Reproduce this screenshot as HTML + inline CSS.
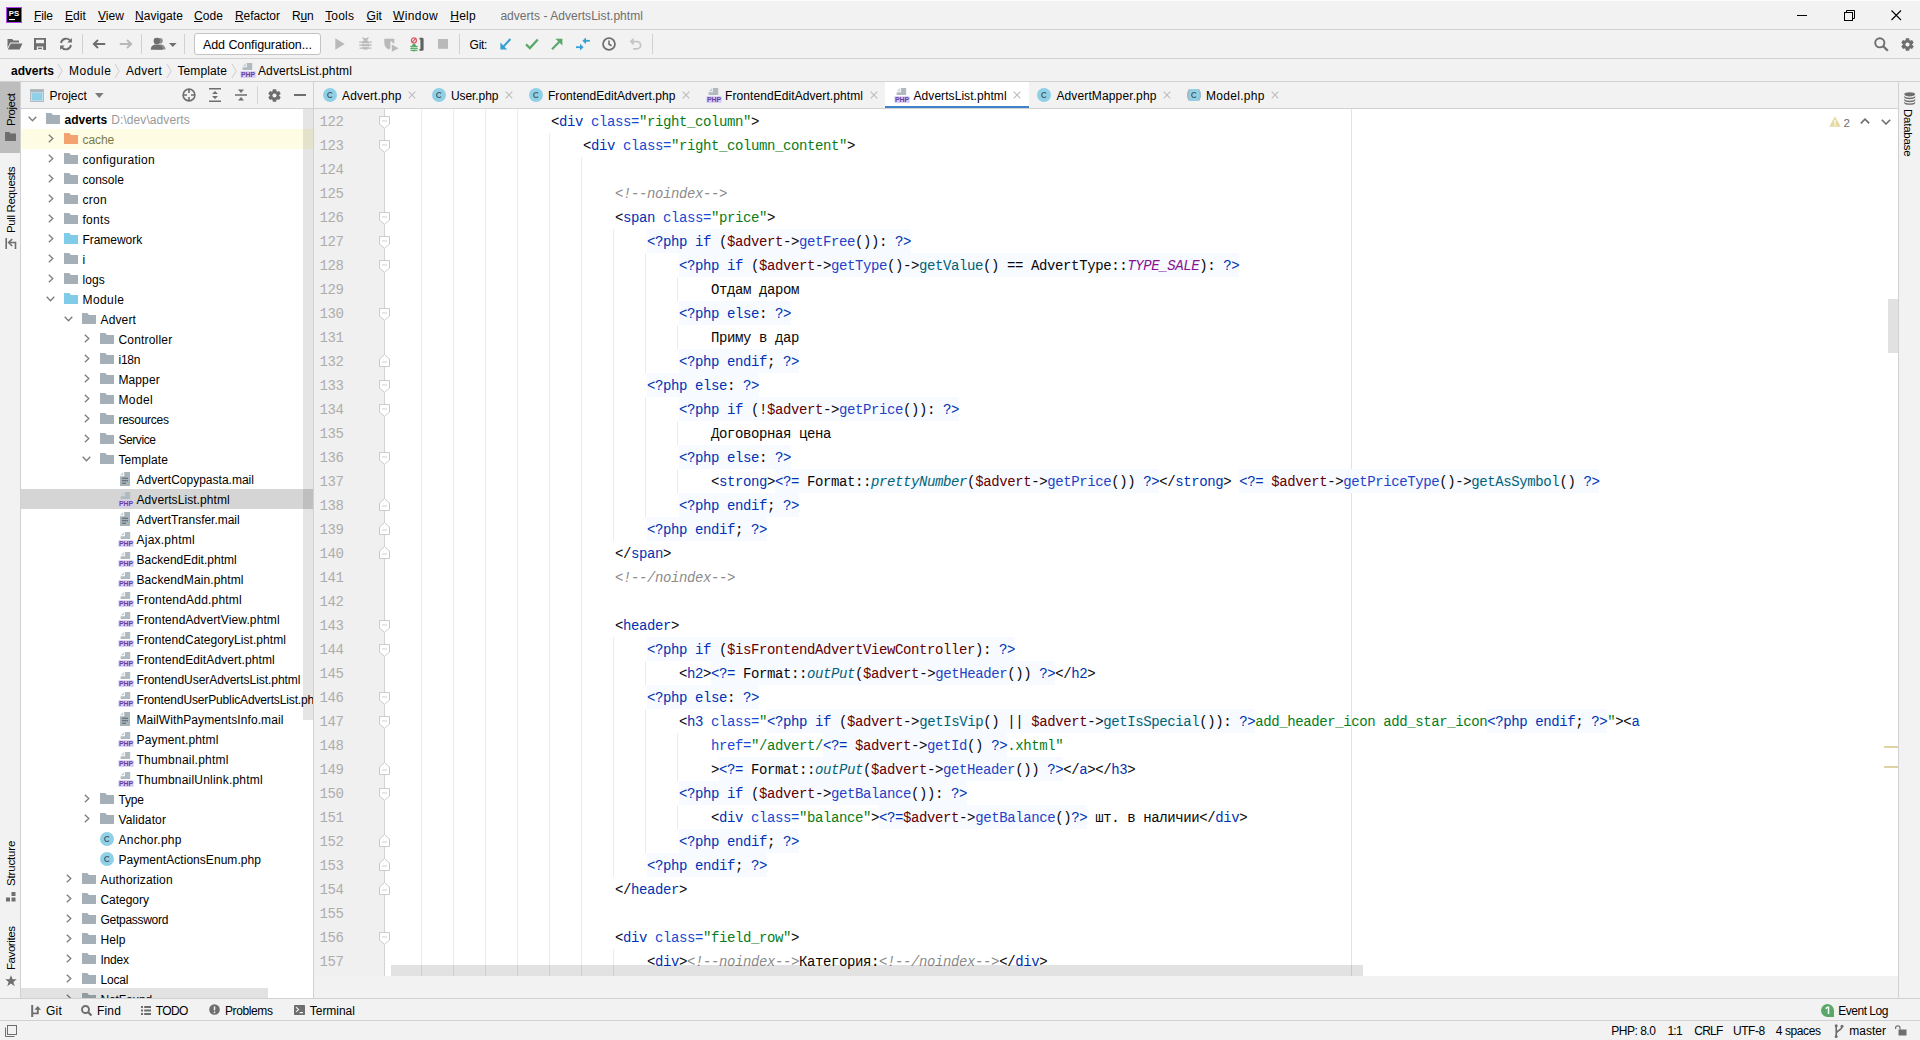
<!DOCTYPE html><html><head><meta charset="utf-8"><title>adverts - AdvertsList.phtml</title><style>

*{margin:0;padding:0;box-sizing:border-box}
html,body{width:1920px;height:1040px;overflow:hidden;background:#f2f2f2}
body{font-family:"Liberation Sans",sans-serif;font-size:12px;color:#000;position:relative}
.abs{position:absolute}
.hl{position:absolute;left:0;width:1920px;height:1px;background:#d1d1d1}
.t{position:absolute;white-space:pre;line-height:16px;height:16px}
u{text-decoration:underline;text-underline-offset:1px}
/* editor */
#ed{position:absolute;left:314px;top:109px;width:1584px;height:867px;background:#fff;overflow:hidden}
#gut{position:absolute;left:0;top:0;width:70px;height:867px;background:#f0f0f0}
#gline{position:absolute;left:70px;top:0;width:1px;height:867px;background:#d4d4d4}
.ln{position:absolute;left:0;width:29.5px;text-align:right;font-family:"Liberation Mono",monospace;font-size:14px;letter-spacing:-0.4px;line-height:26px;height:24px;color:#adadad}
.cl{position:absolute;white-space:pre;font-family:"Liberation Mono",monospace;font-size:14px;letter-spacing:-0.4px;line-height:26px;height:24px;color:#080808}
.P{background:#f7faff;padding:5px 0 3px}
.tn{color:#0033b3}.an{color:#174ad4}.av{color:#067d17}.cm{color:#8c8c8c;font-style:italic}
.kw{color:#0033b3}.v{color:#660000}.m{color:#00627a}.mm{color:#1f43c4}.sm{color:#00627a;font-style:italic}.cn{color:#871094;font-style:italic}
.g{position:absolute;width:1px;background:#ebebeb}
/* tree */
#tree{position:absolute;left:21px;top:109px;width:292px;height:889px;background:#fff;overflow:hidden}
.row{position:absolute;left:0;width:292px;height:20px}
.row .nm{position:absolute;top:3px;line-height:16px;white-space:pre;font-size:12px}
.row svg{position:absolute}

</style></head><body>
<svg class="abs" style="left:6px;top:7px" width="16" height="16" viewBox="0 0 16 16"><rect width="16" height="16" fill="#b345f1"/><rect x="1" y="1" width="14" height="14" fill="#000"/><text x="2.7" y="9" font-family="Liberation Sans" font-weight="bold" font-size="7.8" fill="#fff">PS</text><rect x="3" y="12" width="6" height="1.1" fill="#fff"/></svg>
<span class="t" style="left:34px;top:8px;letter-spacing:-0.148px;"><u>F</u>ile</span>
<span class="t" style="left:65px;top:8px;letter-spacing:0.071px;"><u>E</u>dit</span>
<span class="t" style="left:98px;top:8px;letter-spacing:0.034px;"><u>V</u>iew</span>
<span class="t" style="left:135px;top:8px;letter-spacing:0.075px;"><u>N</u>avigate</span>
<span class="t" style="left:194px;top:8px;letter-spacing:0.071px;"><u>C</u>ode</span>
<span class="t" style="left:235px;top:8px;letter-spacing:-0.066px;"><u>R</u>efactor</span>
<span class="t" style="left:292px;top:8px;letter-spacing:-0.208px;">R<u>u</u>n</span>
<span class="t" style="left:325.2px;top:8px;letter-spacing:0.171px;"><u>T</u>ools</span>
<span class="t" style="left:366.5px;top:8px;letter-spacing:0.028px;"><u>G</u>it</span>
<span class="t" style="left:393px;top:8px;letter-spacing:0.382px;"><u>W</u>indow</span>
<span class="t" style="left:450.2px;top:8px;letter-spacing:0.271px;"><u>H</u>elp</span>
<span class="t" style="left:500.4px;top:8px;color:#6e6e6e;letter-spacing:0.043px;">adverts - AdvertsList.phtml</span>
<svg class="abs" style="left:1797px;top:15px" width="10" height="1" viewBox="0 0 10 1"><rect width="10" height="1" fill="#000"/></svg>
<svg class="abs" style="left:1844px;top:10px" width="11" height="11" viewBox="0 0 11 11"><path d="M2.5 2.5V0.5h8v8h-2" fill="none" stroke="#000"/><rect x="0.5" y="2.5" width="8" height="8" fill="none" stroke="#000"/></svg>
<svg class="abs" style="left:1891px;top:10px" width="11" height="11" viewBox="0 0 11 11"><path d="M0.5 0.5L10 10M10 0.5L0.5 10" stroke="#000" stroke-width="1.1" fill="none"/></svg>
<div class="hl" style="top:29px"></div><div class="hl" style="top:0;background:#fbfbfb"></div>
<svg class="abs" style="left:7px;top:38px" width="16" height="12" viewBox="0 0 16 12"><path d="M0.5 1h4.6l1.4 1.6h5.5v2H3.3L0.5 10z" fill="#6e6e6e"/><path d="M3.8 5.6H15.5L12.6 11.5H0.8z" fill="#6e6e6e"/></svg>
<svg class="abs" style="left:34px;top:38px" width="12" height="12" viewBox="0 0 12 12"><path d="M0 0h12v12H0z M2 1.8v3.4h8V1.8z M2.8 8.4v3.6h6.4V8.4z" fill="#6e6e6e" fill-rule="evenodd"/><rect x="4" y="9.6" width="4" height="1.5" fill="#6e6e6e"/></svg>
<svg class="abs" style="left:59px;top:37px" width="14" height="14" viewBox="0 0 14 14"><path d="M11.6 4.2A5.2 5.2 0 0 0 2 6" fill="none" stroke="#6e6e6e" stroke-width="1.8"/><path d="M2.4 9.8A5.2 5.2 0 0 0 12 8" fill="none" stroke="#6e6e6e" stroke-width="1.8"/><path d="M12.9 1v4.6H8.3z" fill="#6e6e6e"/><path d="M1.1 13V8.4h4.6z" fill="#6e6e6e"/></svg>
<div class="abs" style="left:82px;top:34px;width:1px;height:20px;background:#d0d0d0"></div>
<svg class="abs" style="left:92px;top:39px" width="14" height="10" viewBox="0 0 14 10"><path d="M13.2 5H2.2M6 1L1.8 5L6 9" fill="none" stroke="#6e6e6e" stroke-width="1.9"/></svg>
<svg class="abs" style="left:118.5px;top:39px" width="14" height="10" viewBox="0 0 14 10"><path d="M0.8 5H11.8M8 1l4.2 4L8 9" fill="none" stroke="#b9b9b9" stroke-width="1.9"/></svg>
<div class="abs" style="left:141px;top:34px;width:1px;height:20px;background:#d0d0d0"></div>
<svg class="abs" style="left:150px;top:37px" width="16" height="14" viewBox="0 0 16 14"><circle cx="10" cy="3.8" r="2.8" fill="#8f8f8f"/><path d="M6 12.6c0-3.4 1.6-5 4.4-5s5 1.6 5 5z" fill="#8f8f8f"/><circle cx="6.8" cy="4" r="3.2" fill="#6e6e6e"/><path d="M0.8 12.8c0-3.6 2.3-5.2 6-5.2s6 1.6 6 5.2z" fill="#6e6e6e"/></svg>
<svg class="abs" style="left:168.5px;top:43px" width="8" height="5" viewBox="0 0 8 5"><path d="M0 0h7.6L3.8 4z" fill="#6e6e6e"/></svg>
<div class="abs" style="left:184px;top:34px;width:1px;height:20px;background:#d0d0d0"></div>
<div class="abs" style="left:194px;top:33px;width:127px;height:22px;background:#fff;border:1px solid #c4c4c4;border-radius:3px"></div>
<span class="t" style="left:203px;top:37px;font-size:12.5px;letter-spacing:-0.084px;">Add Configuration...</span>
<svg class="abs" style="left:334.5px;top:38px" width="10" height="12" viewBox="0 0 10 12"><path d="M0.3 0.3v11.4L9.7 6z" fill="#b9b9b9"/></svg>
<svg class="abs" style="left:359px;top:37px" width="13" height="13" viewBox="0 0 13 13"><path d="M6.5 3.2c2.4 0 3.6 1.6 3.6 4.6S8.9 12.8 6.5 12.8S2.9 10.8 2.9 7.8S4.1 3.2 6.5 3.2z" fill="#b9b9b9"/><path d="M4.2 3.4a2.3 2.3 0 0 1 4.6 0z" fill="#b9b9b9"/><path d="M0.2 5.2h12.6M0.2 8.2h12.6M0.6 11.2h11.8M3.6 0.4l1.4 1.8M9.4 0.4L8 2.2" stroke="#b9b9b9" stroke-width="1.2" fill="none"/><path d="M3.4 6.7h6.2M3.4 9.7h6.2" stroke="#f2f2f2" stroke-width="0.9"/></svg>
<svg class="abs" style="left:384px;top:38px" width="15" height="14" viewBox="0 0 15 14"><path d="M0.3 0.8h10v4.4H8.4V3.4H6.4v6.4l-1.2 1.6C2 10.6 0.3 8 0.3 5z" fill="#b9b9b9"/><path d="M7.8 6.6v7.2l6.8-3.6z" fill="#b9b9b9"/></svg>
<svg class="abs" style="left:409.5px;top:36.5px" width="14" height="15" viewBox="0 0 14 15"><circle cx="3.9" cy="3.4" r="2.5" fill="none" stroke="#db5860" stroke-width="1.3"/><path d="M2.2 5.1L5.6 1.7" stroke="#db5860" stroke-width="1.2"/><ellipse cx="4" cy="11" rx="2.5" ry="3.4" fill="#59a869"/><path d="M2.4 8.2a1.6 1.6 0 0 1 3.2 0z" fill="#59a869"/><path d="M0.2 9.4h7.6M0.2 11.4h7.6M0.4 13.4h7.2" stroke="#59a869" stroke-width="1"/><path d="M1.8 10.4h4.4M1.8 12.4h4.4" stroke="#f2f2f2" stroke-width="0.7"/><path d="M9.4 0.7h2.6c1 0 1.6 0.6 1.6 1.6v9.9c0 1-0.6 1.6-1.6 1.6H9.4v-1.9h1V2.6h-1z" fill="#616161"/></svg>
<svg class="abs" style="left:438px;top:39px" width="10" height="10" viewBox="0 0 10 10"><rect width="10" height="9.8" fill="#b9b9b9"/></svg>
<div class="abs" style="left:459px;top:34px;width:1px;height:20px;background:#d0d0d0"></div>
<span class="t" style="left:469.6px;top:37px;letter-spacing:-0.291px;">Git:</span>
<svg class="abs" style="left:499.5px;top:37.5px" width="12" height="12" viewBox="0 0 12 12"><path d="M10.4 1L3.4 8.6" fill="none" stroke="#389fd6" stroke-width="2.1"/><path d="M0.4 4.6v6.8h6.8z" fill="#389fd6"/></svg>
<svg class="abs" style="left:525px;top:38px" width="14" height="12" viewBox="0 0 14 12"><path d="M1 6.4l3.9 3.7L12.8 1.4" fill="none" stroke="#59a869" stroke-width="2.2"/></svg>
<svg class="abs" style="left:551px;top:38px" width="12" height="12" viewBox="0 0 12 12"><path d="M1 11.2L8.4 3.8" fill="none" stroke="#59a869" stroke-width="2.1"/><path d="M4.4 0.7h7v6.9z" fill="#59a869"/></svg>
<svg class="abs" style="left:576px;top:37px" width="14" height="14" viewBox="0 0 14 14"><path d="M13.8 3.8H9" stroke="#389fd6" stroke-width="1.8"/><path d="M6.4 3.8L10 0.4v6.8z" fill="#389fd6"/><path d="M0 10.2h4.8" stroke="#389fd6" stroke-width="1.8"/><path d="M7.6 10.2L4 6.8v6.8z" fill="#389fd6"/></svg>
<svg class="abs" style="left:602px;top:37px" width="14" height="14" viewBox="0 0 14 14"><circle cx="7" cy="7" r="5.95" fill="none" stroke="#6e6e6e" stroke-width="1.8"/><path d="M7 3.6V7.2l2.6 1.6" fill="none" stroke="#6e6e6e" stroke-width="1.6"/></svg>
<svg class="abs" style="left:629px;top:37px" width="13" height="13" viewBox="0 0 13 13"><path d="M3 4.6h5a3.6 3.6 0 0 1 0 7.2H4" fill="none" stroke="#c4c4c4" stroke-width="1.7"/><path d="M0.6 4.6L4.6 0.8v7.6z" fill="#c4c4c4"/></svg>
<div class="abs" style="left:652px;top:34px;width:1px;height:20px;background:#d0d0d0"></div>
<svg class="abs" style="left:1874px;top:37px" width="15" height="15" viewBox="0 0 15 15"><circle cx="5.8" cy="5.8" r="4.6" fill="none" stroke="#6e6e6e" stroke-width="1.9"/><path d="M9.2 9.2L13.8 13.8" stroke="#6e6e6e" stroke-width="2.3"/></svg>
<svg class="abs" style="left:1901px;top:38px" width="13" height="13" viewBox="0 0 14 14"><path d="M5.2 0.3h3.6l0.5 3h-4.6z M5.2 13.7h3.6l0.5-3h-4.6z" fill="#6e6e6e" transform="rotate(0 7 7)"/><path d="M5.2 0.3h3.6l0.5 3h-4.6z M5.2 13.7h3.6l0.5-3h-4.6z" fill="#6e6e6e" transform="rotate(60 7 7)"/><path d="M5.2 0.3h3.6l0.5 3h-4.6z M5.2 13.7h3.6l0.5-3h-4.6z" fill="#6e6e6e" transform="rotate(120 7 7)"/><circle cx="7" cy="7" r="4.9" fill="#6e6e6e"/><circle cx="7" cy="7" r="2.2" fill="#f2f2f2"/></svg>
<div class="hl" style="top:58px"></div>
<span class="t" style="left:11px;top:63px;font-weight:bold;letter-spacing:0.033px;">adverts</span>
<span class="t" style="left:69px;top:63px;letter-spacing:0.508px;">Module</span>
<span class="t" style="left:126px;top:63px;letter-spacing:0.242px;">Advert</span>
<span class="t" style="left:177.5px;top:63px;letter-spacing:0.1px;">Template</span>
<svg class="abs" style="left:57px;top:63px" width="7" height="16" viewBox="0 0 7 16"><path d="M1 1L5.2 8L1 15" fill="none" stroke="#cdcdcd" stroke-width="1"/></svg>
<svg class="abs" style="left:114px;top:63px" width="7" height="16" viewBox="0 0 7 16"><path d="M1 1L5.2 8L1 15" fill="none" stroke="#cdcdcd" stroke-width="1"/></svg>
<svg class="abs" style="left:166px;top:63px" width="7" height="16" viewBox="0 0 7 16"><path d="M1 1L5.2 8L1 15" fill="none" stroke="#cdcdcd" stroke-width="1"/></svg>
<svg class="abs" style="left:231px;top:63px" width="7" height="16" viewBox="0 0 7 16"><path d="M1 1L5.2 8L1 15" fill="none" stroke="#cdcdcd" stroke-width="1"/></svg>
<svg class="abs" style="left:239.5px;top:62px" width="16" height="16" viewBox="0 0 16 16"><path d="M6.9 1h5.3v7H2.6V5.3h4.3z" fill="#b1bac1"/><path d="M5.9 1.1v3.2H2.7z" fill="#c6ced3"/><rect x="0.4" y="9.3" width="15.2" height="6.5" fill="#d9c8f4"/><text x="8" y="15.3" text-anchor="middle" font-family="Liberation Sans" font-weight="bold" font-size="7.3" fill="#6443a0" textLength="14.2" lengthAdjust="spacingAndGlyphs">PHP</text></svg>
<span class="t" style="left:258px;top:63px;letter-spacing:0.116px;">AdvertsList.phtml</span>
<div class="hl" style="top:81px"></div>
<div class="abs" style="left:885px;top:82px;width:144px;height:24px;background:#fff"></div>
<svg class="abs" style="left:322.5px;top:88px" width="14" height="14" viewBox="0 0 14 14"><circle cx="7" cy="7" r="7" fill="#8fd0e6"/><path d="M9.1 5.4A2.5 2.5 0 1 0 9.1 8.6" fill="none" stroke="#4a5a66" stroke-width="1.15"/></svg>
<span class="t" style="left:342px;top:88px;letter-spacing:0.15px;">Advert.php</span>
<svg class="abs" style="left:408px;top:91.4px" width="8" height="8" viewBox="0 0 8 8"><path d="M0.7 0.7L7.3 7.3M7.3 0.7L0.7 7.3" stroke="#bcbcbc" stroke-width="1.1" fill="none"/></svg>
<svg class="abs" style="left:431.5px;top:88px" width="14" height="14" viewBox="0 0 14 14"><circle cx="7" cy="7" r="7" fill="#8fd0e6"/><path d="M9.1 5.4A2.5 2.5 0 1 0 9.1 8.6" fill="none" stroke="#4a5a66" stroke-width="1.15"/></svg>
<span class="t" style="left:451px;top:88px;letter-spacing:-0.09px;">User.php</span>
<svg class="abs" style="left:505px;top:91.4px" width="8" height="8" viewBox="0 0 8 8"><path d="M0.7 0.7L7.3 7.3M7.3 0.7L0.7 7.3" stroke="#bcbcbc" stroke-width="1.1" fill="none"/></svg>
<svg class="abs" style="left:528.5px;top:88px" width="14" height="14" viewBox="0 0 14 14"><circle cx="7" cy="7" r="7" fill="#8fd0e6"/><path d="M9.1 5.4A2.5 2.5 0 1 0 9.1 8.6" fill="none" stroke="#4a5a66" stroke-width="1.15"/></svg>
<span class="t" style="left:548px;top:88px;letter-spacing:0.031px;">FrontendEditAdvert.php</span>
<svg class="abs" style="left:682px;top:91.4px" width="8" height="8" viewBox="0 0 8 8"><path d="M0.7 0.7L7.3 7.3M7.3 0.7L0.7 7.3" stroke="#bcbcbc" stroke-width="1.1" fill="none"/></svg>
<svg class="abs" style="left:705.5px;top:87px" width="16" height="16" viewBox="0 0 16 16"><path d="M6.9 1h5.3v7H2.6V5.3h4.3z" fill="#b1bac1"/><path d="M5.9 1.1v3.2H2.7z" fill="#c6ced3"/><rect x="0.4" y="9.3" width="15.2" height="6.5" fill="#d9c8f4"/><text x="8" y="15.3" text-anchor="middle" font-family="Liberation Sans" font-weight="bold" font-size="7.3" fill="#6443a0" textLength="14.2" lengthAdjust="spacingAndGlyphs">PHP</text></svg>
<span class="t" style="left:725px;top:88px;letter-spacing:0.079px;">FrontendEditAdvert.phtml</span>
<svg class="abs" style="left:870px;top:91.4px" width="8" height="8" viewBox="0 0 8 8"><path d="M0.7 0.7L7.3 7.3M7.3 0.7L0.7 7.3" stroke="#bcbcbc" stroke-width="1.1" fill="none"/></svg>
<svg class="abs" style="left:893.5px;top:87px" width="16" height="16" viewBox="0 0 16 16"><path d="M6.9 1h5.3v7H2.6V5.3h4.3z" fill="#b1bac1"/><path d="M5.9 1.1v3.2H2.7z" fill="#c6ced3"/><rect x="0.4" y="9.3" width="15.2" height="6.5" fill="#d9c8f4"/><text x="8" y="15.3" text-anchor="middle" font-family="Liberation Sans" font-weight="bold" font-size="7.3" fill="#6443a0" textLength="14.2" lengthAdjust="spacingAndGlyphs">PHP</text></svg>
<span class="t" style="left:913.5px;top:88px;letter-spacing:0.066px;">AdvertsList.phtml</span>
<svg class="abs" style="left:1013px;top:91.4px" width="8" height="8" viewBox="0 0 8 8"><path d="M0.7 0.7L7.3 7.3M7.3 0.7L0.7 7.3" stroke="#bcbcbc" stroke-width="1.1" fill="none"/></svg>
<svg class="abs" style="left:1037px;top:88px" width="14" height="14" viewBox="0 0 14 14"><circle cx="7" cy="7" r="7" fill="#8fd0e6"/><path d="M9.1 5.4A2.5 2.5 0 1 0 9.1 8.6" fill="none" stroke="#4a5a66" stroke-width="1.15"/></svg>
<span class="t" style="left:1056.4px;top:88px;letter-spacing:0.129px;">AdvertMapper.php</span>
<svg class="abs" style="left:1163px;top:91.4px" width="8" height="8" viewBox="0 0 8 8"><path d="M0.7 0.7L7.3 7.3M7.3 0.7L0.7 7.3" stroke="#bcbcbc" stroke-width="1.1" fill="none"/></svg>
<svg class="abs" style="left:1187px;top:88px" width="14" height="14" viewBox="0 0 14 14"><path d="M3 1.1a7 7 0 0 0 0 11.8h8a7 7 0 0 0 0-11.8z" fill="#8fd0e6"/><path d="M9.1 5.4A2.5 2.5 0 1 0 9.1 8.6" fill="none" stroke="#4a5a66" stroke-width="1.15"/><path d="M2.4 1.4Q-0.6 7 2.4 12.6M11.6 1.4Q14.6 7 11.6 12.6" fill="none" stroke="#a8b3bb" stroke-width="1.3"/><rect x="0" y="0" width="2" height="14" fill="#f2f2f2" opacity="0"/></svg>
<span class="t" style="left:1206px;top:88px;letter-spacing:0.307px;">Model.php</span>
<svg class="abs" style="left:1271px;top:91.4px" width="8" height="8" viewBox="0 0 8 8"><path d="M0.7 0.7L7.3 7.3M7.3 0.7L0.7 7.3" stroke="#bcbcbc" stroke-width="1.1" fill="none"/></svg>
<div class="abs" style="left:885px;top:106px;width:144px;height:3px;background:#4083c9"></div>
<div class="abs" style="left:314px;top:108px;width:1585px;height:1px;background:#d1d1d1"></div>
<div class="abs" style="left:0;top:82px;width:20px;height:916px;background:#f2f2f2"></div>
<div class="abs" style="left:20px;top:82px;width:1px;height:916px;background:#d1d1d1"></div>
<div class="abs" style="left:0;top:82px;width:20px;height:71px;background:#bdbdbd"></div>
<span class="t" style="left:3.0999999999999996px;top:125.6px;transform-origin:0 0;transform:rotate(-90deg);font-size:11.5px;letter-spacing:-0.483px;">Project</span>
<svg class="abs" style="left:5px;top:132px" width="11" height="9" viewBox="0 0 11 9"><path d="M0 0h4.2l1.4 1.6H11V9H0z" fill="#6e6e6e"/></svg>
<span class="t" style="left:3.0999999999999996px;top:232.6px;transform-origin:0 0;transform:rotate(-90deg);font-size:11.5px;letter-spacing:-0.381px;">Pull Requests</span>
<svg class="abs" style="left:5px;top:238px" width="12" height="11" viewBox="0 0 12 11"><path d="M1.2 0v11" stroke="#6e6e6e" stroke-width="1.6"/><path d="M10.5 11V4.5H4.5" fill="none" stroke="#6e6e6e" stroke-width="1.6"/><path d="M7.2 1L3.6 4.5l3.6 3.5" fill="none" stroke="#6e6e6e" stroke-width="1.6"/></svg>
<span class="t" style="left:3.0999999999999996px;top:886px;transform-origin:0 0;transform:rotate(-90deg);font-size:11.5px;letter-spacing:-0.159px;">Structure</span>
<svg class="abs" style="left:6px;top:892px" width="10" height="10" viewBox="0 0 10 10"><rect x="5.5" y="0" width="4" height="4" fill="#6e6e6e"/><rect x="0" y="5.5" width="4" height="4" fill="#6e6e6e"/><rect x="5.5" y="5.5" width="4" height="4" fill="#6e6e6e"/></svg>
<span class="t" style="left:3.0999999999999996px;top:970px;transform-origin:0 0;transform:rotate(-90deg);font-size:11.5px;letter-spacing:-0.425px;">Favorites</span>
<svg class="abs" style="left:4.5px;top:975px" width="12" height="12" viewBox="0 0 12 12"><path d="M6 0.3l1.6 4h4.2l-3.4 2.6l1.3 4.3L6 8.6l-3.7 2.6l1.3-4.3L0.2 4.3h4.2z" fill="#6e6e6e"/></svg>
<svg class="abs" style="left:30px;top:89px" width="14" height="13" viewBox="0 0 14 13"><rect x="0.5" y="0.5" width="13" height="12" fill="#e8eef1" stroke="#b4bcc2"/><rect x="1" y="1" width="12" height="2.2" fill="#a9b4bc"/><rect x="1.5" y="3.6" width="11" height="8" fill="#8fd0e6"/></svg>
<span class="t" style="left:49.5px;top:88px;letter-spacing:0.007px;">Project</span>
<svg class="abs" style="left:95px;top:93px" width="9" height="5" viewBox="0 0 9 5"><path d="M0 0h8.6L4.3 5z" fill="#7a7a7a"/></svg>
<svg class="abs" style="left:182px;top:88px" width="14" height="14" viewBox="0 0 14 14"><circle cx="7" cy="7" r="5.9" fill="none" stroke="#6e6e6e" stroke-width="1.6"/><path d="M7 1v4M7 9v4M1 7h4M9 7h4" stroke="#6e6e6e" stroke-width="1.6"/></svg>
<svg class="abs" style="left:209px;top:88px" width="12" height="14" viewBox="0 0 12 14"><path d="M0 0.8h12M0 13.2h12" stroke="#6e6e6e" stroke-width="1.5"/><path d="M6 3l3 3H3zM6 11l3-3H3z" fill="#6e6e6e"/></svg>
<svg class="abs" style="left:235px;top:88px" width="12" height="14" viewBox="0 0 12 14"><path d="M0 7h12" stroke="#6e6e6e" stroke-width="1.5"/><path d="M6 5L9 1.5H3zM6 9l3 3.5H3z" fill="#6e6e6e"/></svg>
<div class="abs" style="left:257px;top:86px;width:1px;height:18px;background:#d6d6d6"></div>
<svg class="abs" style="left:267.5px;top:88.5px" width="13" height="13" viewBox="0 0 14 14"><path d="M5.2 0.3h3.6l0.5 3h-4.6z M5.2 13.7h3.6l0.5-3h-4.6z" fill="#6e6e6e" transform="rotate(0 7 7)"/><path d="M5.2 0.3h3.6l0.5 3h-4.6z M5.2 13.7h3.6l0.5-3h-4.6z" fill="#6e6e6e" transform="rotate(60 7 7)"/><path d="M5.2 0.3h3.6l0.5 3h-4.6z M5.2 13.7h3.6l0.5-3h-4.6z" fill="#6e6e6e" transform="rotate(120 7 7)"/><circle cx="7" cy="7" r="4.9" fill="#6e6e6e"/><circle cx="7" cy="7" r="2.2" fill="#f2f2f2"/></svg>
<svg class="abs" style="left:294px;top:94px" width="12" height="2" viewBox="0 0 12 2"><rect width="12" height="2" fill="#6e6e6e"/></svg>
<div class="abs" style="left:21px;top:108px;width:292px;height:1px;background:#d1d1d1"></div>
<div class="abs" style="left:313px;top:82px;width:1px;height:916px;background:#d1d1d1"></div>
<div id="tree"><div class="row" style="top:0px;"><svg class="abs" style="left:7px;top:6.6px" width="9" height="6" viewBox="0 0 9 6"><path d="M0.7 0.8L4.5 4.8L8.3 0.8" fill="none" stroke="#7d7d7d" stroke-width="1.3"/></svg><svg class="abs" style="left:25px;top:4px" width="14" height="11" viewBox="0 0 14 11"><path d="M0 0h5.2l1.8 2H14v9H0z" fill="#a4afb7"/></svg><span class="nm" style="left:43.5px;letter-spacing:-0.009px;font-weight:bold">adverts</span><span class="nm" style="left:90.3px;color:#999;letter-spacing:0.075px">D:\dev\adverts</span></div>
<div class="row" style="top:20px;background:#fffce4;"><svg class="abs" style="left:26.5px;top:5px" width="6" height="9" viewBox="0 0 6 9"><path d="M0.8 0.7L4.8 4.5L0.8 8.3" fill="none" stroke="#7d7d7d" stroke-width="1.3"/></svg><svg class="abs" style="left:43px;top:4px" width="14" height="11" viewBox="0 0 14 11"><path d="M0 0h5.2l1.8 2H14v9H0z" fill="#f4a26f"/></svg><span class="nm" style="left:61.5px;letter-spacing:-0.095px;color:#7a7a47">cache</span></div>
<div class="row" style="top:40px;"><svg class="abs" style="left:26.5px;top:5px" width="6" height="9" viewBox="0 0 6 9"><path d="M0.8 0.7L4.8 4.5L0.8 8.3" fill="none" stroke="#7d7d7d" stroke-width="1.3"/></svg><svg class="abs" style="left:43px;top:4px" width="14" height="11" viewBox="0 0 14 11"><path d="M0 0h5.2l1.8 2H14v9H0z" fill="#a4afb7"/></svg><span class="nm" style="left:61.5px;letter-spacing:0.286px;">configuration</span></div>
<div class="row" style="top:60px;"><svg class="abs" style="left:26.5px;top:5px" width="6" height="9" viewBox="0 0 6 9"><path d="M0.8 0.7L4.8 4.5L0.8 8.3" fill="none" stroke="#7d7d7d" stroke-width="1.3"/></svg><svg class="abs" style="left:43px;top:4px" width="14" height="11" viewBox="0 0 14 11"><path d="M0 0h5.2l1.8 2H14v9H0z" fill="#a4afb7"/></svg><span class="nm" style="left:61.5px;letter-spacing:0.004px;">console</span></div>
<div class="row" style="top:80px;"><svg class="abs" style="left:26.5px;top:5px" width="6" height="9" viewBox="0 0 6 9"><path d="M0.8 0.7L4.8 4.5L0.8 8.3" fill="none" stroke="#7d7d7d" stroke-width="1.3"/></svg><svg class="abs" style="left:43px;top:4px" width="14" height="11" viewBox="0 0 14 11"><path d="M0 0h5.2l1.8 2H14v9H0z" fill="#a4afb7"/></svg><span class="nm" style="left:61.5px;letter-spacing:0.269px;">cron</span></div>
<div class="row" style="top:100px;"><svg class="abs" style="left:26.5px;top:5px" width="6" height="9" viewBox="0 0 6 9"><path d="M0.8 0.7L4.8 4.5L0.8 8.3" fill="none" stroke="#7d7d7d" stroke-width="1.3"/></svg><svg class="abs" style="left:43px;top:4px" width="14" height="11" viewBox="0 0 14 11"><path d="M0 0h5.2l1.8 2H14v9H0z" fill="#a4afb7"/></svg><span class="nm" style="left:61.5px;letter-spacing:0.284px;">fonts</span></div>
<div class="row" style="top:120px;"><svg class="abs" style="left:26.5px;top:5px" width="6" height="9" viewBox="0 0 6 9"><path d="M0.8 0.7L4.8 4.5L0.8 8.3" fill="none" stroke="#7d7d7d" stroke-width="1.3"/></svg><svg class="abs" style="left:43px;top:4px" width="14" height="11" viewBox="0 0 14 11"><path d="M0 0h5.2l1.8 2H14v9H0z" fill="#7fcbe8"/></svg><span class="nm" style="left:61.5px;letter-spacing:-0.046px;">Framework</span></div>
<div class="row" style="top:140px;"><svg class="abs" style="left:26.5px;top:5px" width="6" height="9" viewBox="0 0 6 9"><path d="M0.8 0.7L4.8 4.5L0.8 8.3" fill="none" stroke="#7d7d7d" stroke-width="1.3"/></svg><svg class="abs" style="left:43px;top:4px" width="14" height="11" viewBox="0 0 14 11"><path d="M0 0h5.2l1.8 2H14v9H0z" fill="#a4afb7"/></svg><span class="nm" style="left:61.5px;">i</span></div>
<div class="row" style="top:160px;"><svg class="abs" style="left:26.5px;top:5px" width="6" height="9" viewBox="0 0 6 9"><path d="M0.8 0.7L4.8 4.5L0.8 8.3" fill="none" stroke="#7d7d7d" stroke-width="1.3"/></svg><svg class="abs" style="left:43px;top:4px" width="14" height="11" viewBox="0 0 14 11"><path d="M0 0h5.2l1.8 2H14v9H0z" fill="#a4afb7"/></svg><span class="nm" style="left:61.5px;letter-spacing:0.045px;">logs</span></div>
<div class="row" style="top:180px;"><svg class="abs" style="left:25px;top:6.6px" width="9" height="6" viewBox="0 0 9 6"><path d="M0.7 0.8L4.5 4.8L8.3 0.8" fill="none" stroke="#7d7d7d" stroke-width="1.3"/></svg><svg class="abs" style="left:43px;top:4px" width="14" height="11" viewBox="0 0 14 11"><path d="M0 0h5.2l1.8 2H14v9H0z" fill="#7fcbe8"/></svg><span class="nm" style="left:61.5px;letter-spacing:0.408px;">Module</span></div>
<div class="row" style="top:200px;"><svg class="abs" style="left:43px;top:6.6px" width="9" height="6" viewBox="0 0 9 6"><path d="M0.7 0.8L4.5 4.8L8.3 0.8" fill="none" stroke="#7d7d7d" stroke-width="1.3"/></svg><svg class="abs" style="left:61px;top:4px" width="14" height="11" viewBox="0 0 14 11"><path d="M0 0h5.2l1.8 2H14v9H0z" fill="#a4afb7"/></svg><span class="nm" style="left:79.5px;letter-spacing:0.142px;">Advert</span></div>
<div class="row" style="top:220px;"><svg class="abs" style="left:62.5px;top:5px" width="6" height="9" viewBox="0 0 6 9"><path d="M0.8 0.7L4.8 4.5L0.8 8.3" fill="none" stroke="#7d7d7d" stroke-width="1.3"/></svg><svg class="abs" style="left:79px;top:4px" width="14" height="11" viewBox="0 0 14 11"><path d="M0 0h5.2l1.8 2H14v9H0z" fill="#a4afb7"/></svg><span class="nm" style="left:97.5px;letter-spacing:0.18px;">Controller</span></div>
<div class="row" style="top:240px;"><svg class="abs" style="left:62.5px;top:5px" width="6" height="9" viewBox="0 0 6 9"><path d="M0.8 0.7L4.8 4.5L0.8 8.3" fill="none" stroke="#7d7d7d" stroke-width="1.3"/></svg><svg class="abs" style="left:79px;top:4px" width="14" height="11" viewBox="0 0 14 11"><path d="M0 0h5.2l1.8 2H14v9H0z" fill="#a4afb7"/></svg><span class="nm" style="left:97.5px;letter-spacing:-0.263px;">i18n</span></div>
<div class="row" style="top:260px;"><svg class="abs" style="left:62.5px;top:5px" width="6" height="9" viewBox="0 0 6 9"><path d="M0.8 0.7L4.8 4.5L0.8 8.3" fill="none" stroke="#7d7d7d" stroke-width="1.3"/></svg><svg class="abs" style="left:79px;top:4px" width="14" height="11" viewBox="0 0 14 11"><path d="M0 0h5.2l1.8 2H14v9H0z" fill="#a4afb7"/></svg><span class="nm" style="left:97.5px;letter-spacing:0.092px;">Mapper</span></div>
<div class="row" style="top:280px;"><svg class="abs" style="left:62.5px;top:5px" width="6" height="9" viewBox="0 0 6 9"><path d="M0.8 0.7L4.8 4.5L0.8 8.3" fill="none" stroke="#7d7d7d" stroke-width="1.3"/></svg><svg class="abs" style="left:79px;top:4px" width="14" height="11" viewBox="0 0 14 11"><path d="M0 0h5.2l1.8 2H14v9H0z" fill="#a4afb7"/></svg><span class="nm" style="left:97.5px;letter-spacing:0.366px;">Model</span></div>
<div class="row" style="top:300px;"><svg class="abs" style="left:62.5px;top:5px" width="6" height="9" viewBox="0 0 6 9"><path d="M0.8 0.7L4.8 4.5L0.8 8.3" fill="none" stroke="#7d7d7d" stroke-width="1.3"/></svg><svg class="abs" style="left:79px;top:4px" width="14" height="11" viewBox="0 0 14 11"><path d="M0 0h5.2l1.8 2H14v9H0z" fill="#a4afb7"/></svg><span class="nm" style="left:97.5px;letter-spacing:-0.286px;">resources</span></div>
<div class="row" style="top:320px;"><svg class="abs" style="left:62.5px;top:5px" width="6" height="9" viewBox="0 0 6 9"><path d="M0.8 0.7L4.8 4.5L0.8 8.3" fill="none" stroke="#7d7d7d" stroke-width="1.3"/></svg><svg class="abs" style="left:79px;top:4px" width="14" height="11" viewBox="0 0 14 11"><path d="M0 0h5.2l1.8 2H14v9H0z" fill="#a4afb7"/></svg><span class="nm" style="left:97.5px;letter-spacing:-0.436px;">Service</span></div>
<div class="row" style="top:340px;"><svg class="abs" style="left:61px;top:6.6px" width="9" height="6" viewBox="0 0 9 6"><path d="M0.7 0.8L4.5 4.8L8.3 0.8" fill="none" stroke="#7d7d7d" stroke-width="1.3"/></svg><svg class="abs" style="left:79px;top:4px" width="14" height="11" viewBox="0 0 14 11"><path d="M0 0h5.2l1.8 2H14v9H0z" fill="#a4afb7"/></svg><span class="nm" style="left:97.5px;letter-spacing:0.1px;">Template</span></div>
<div class="row" style="top:360px;"><svg class="abs" style="left:99px;top:3px" width="10" height="14" viewBox="0 0 10 14"><path d="M4.2 0h5.8v14H0V4.2h4.2z" fill="#a9b3ba"/><path d="M3.2 0.1v3.1H0.1z" fill="#c3cbd1"/><path d="M2 6.2h6M2 8.7h6M2 11.2h4" stroke="#55626b" stroke-width="1.1"/></svg><span class="nm" style="left:115.5px;">AdvertCopypasta.mail</span></div>
<div class="row" style="top:380px;background:#d5d5d5;"><svg class="abs" style="left:96.5px;top:2px" width="16" height="16" viewBox="0 0 16 16"><path d="M6.9 1h5.3v7H2.6V5.3h4.3z" fill="#b1bac1"/><path d="M5.9 1.1v3.2H2.7z" fill="#c6ced3"/><rect x="0.4" y="9.3" width="15.2" height="6.5" fill="#d9c8f4"/><text x="8" y="15.3" text-anchor="middle" font-family="Liberation Sans" font-weight="bold" font-size="7.3" fill="#6443a0" textLength="14.2" lengthAdjust="spacingAndGlyphs">PHP</text></svg><span class="nm" style="left:115.5px;letter-spacing:0.069px;">AdvertsList.phtml</span></div>
<div class="row" style="top:400px;"><svg class="abs" style="left:99px;top:3px" width="10" height="14" viewBox="0 0 10 14"><path d="M4.2 0h5.8v14H0V4.2h4.2z" fill="#a9b3ba"/><path d="M3.2 0.1v3.1H0.1z" fill="#c3cbd1"/><path d="M2 6.2h6M2 8.7h6M2 11.2h4" stroke="#55626b" stroke-width="1.1"/></svg><span class="nm" style="left:115.5px;letter-spacing:-0.025px;">AdvertTransfer.mail</span></div>
<div class="row" style="top:420px;"><svg class="abs" style="left:96.5px;top:2px" width="16" height="16" viewBox="0 0 16 16"><path d="M6.9 1h5.3v7H2.6V5.3h4.3z" fill="#b1bac1"/><path d="M5.9 1.1v3.2H2.7z" fill="#c6ced3"/><rect x="0.4" y="9.3" width="15.2" height="6.5" fill="#d9c8f4"/><text x="8" y="15.3" text-anchor="middle" font-family="Liberation Sans" font-weight="bold" font-size="7.3" fill="#6443a0" textLength="14.2" lengthAdjust="spacingAndGlyphs">PHP</text></svg><span class="nm" style="left:115.5px;letter-spacing:0.235px;">Ajax.phtml</span></div>
<div class="row" style="top:440px;"><svg class="abs" style="left:96.5px;top:2px" width="16" height="16" viewBox="0 0 16 16"><path d="M6.9 1h5.3v7H2.6V5.3h4.3z" fill="#b1bac1"/><path d="M5.9 1.1v3.2H2.7z" fill="#c6ced3"/><rect x="0.4" y="9.3" width="15.2" height="6.5" fill="#d9c8f4"/><text x="8" y="15.3" text-anchor="middle" font-family="Liberation Sans" font-weight="bold" font-size="7.3" fill="#6443a0" textLength="14.2" lengthAdjust="spacingAndGlyphs">PHP</text></svg><span class="nm" style="left:115.5px;letter-spacing:0.005px;">BackendEdit.phtml</span></div>
<div class="row" style="top:460px;"><svg class="abs" style="left:96.5px;top:2px" width="16" height="16" viewBox="0 0 16 16"><path d="M6.9 1h5.3v7H2.6V5.3h4.3z" fill="#b1bac1"/><path d="M5.9 1.1v3.2H2.7z" fill="#c6ced3"/><rect x="0.4" y="9.3" width="15.2" height="6.5" fill="#d9c8f4"/><text x="8" y="15.3" text-anchor="middle" font-family="Liberation Sans" font-weight="bold" font-size="7.3" fill="#6443a0" textLength="14.2" lengthAdjust="spacingAndGlyphs">PHP</text></svg><span class="nm" style="left:115.5px;letter-spacing:0.094px;">BackendMain.phtml</span></div>
<div class="row" style="top:480px;"><svg class="abs" style="left:96.5px;top:2px" width="16" height="16" viewBox="0 0 16 16"><path d="M6.9 1h5.3v7H2.6V5.3h4.3z" fill="#b1bac1"/><path d="M5.9 1.1v3.2H2.7z" fill="#c6ced3"/><rect x="0.4" y="9.3" width="15.2" height="6.5" fill="#d9c8f4"/><text x="8" y="15.3" text-anchor="middle" font-family="Liberation Sans" font-weight="bold" font-size="7.3" fill="#6443a0" textLength="14.2" lengthAdjust="spacingAndGlyphs">PHP</text></svg><span class="nm" style="left:115.5px;letter-spacing:0.193px;">FrontendAdd.phtml</span></div>
<div class="row" style="top:500px;"><svg class="abs" style="left:96.5px;top:2px" width="16" height="16" viewBox="0 0 16 16"><path d="M6.9 1h5.3v7H2.6V5.3h4.3z" fill="#b1bac1"/><path d="M5.9 1.1v3.2H2.7z" fill="#c6ced3"/><rect x="0.4" y="9.3" width="15.2" height="6.5" fill="#d9c8f4"/><text x="8" y="15.3" text-anchor="middle" font-family="Liberation Sans" font-weight="bold" font-size="7.3" fill="#6443a0" textLength="14.2" lengthAdjust="spacingAndGlyphs">PHP</text></svg><span class="nm" style="left:115.5px;letter-spacing:0.114px;">FrontendAdvertView.phtml</span></div>
<div class="row" style="top:520px;"><svg class="abs" style="left:96.5px;top:2px" width="16" height="16" viewBox="0 0 16 16"><path d="M6.9 1h5.3v7H2.6V5.3h4.3z" fill="#b1bac1"/><path d="M5.9 1.1v3.2H2.7z" fill="#c6ced3"/><rect x="0.4" y="9.3" width="15.2" height="6.5" fill="#d9c8f4"/><text x="8" y="15.3" text-anchor="middle" font-family="Liberation Sans" font-weight="bold" font-size="7.3" fill="#6443a0" textLength="14.2" lengthAdjust="spacingAndGlyphs">PHP</text></svg><span class="nm" style="left:115.5px;letter-spacing:0.053px;">FrontendCategoryList.phtml</span></div>
<div class="row" style="top:540px;"><svg class="abs" style="left:96.5px;top:2px" width="16" height="16" viewBox="0 0 16 16"><path d="M6.9 1h5.3v7H2.6V5.3h4.3z" fill="#b1bac1"/><path d="M5.9 1.1v3.2H2.7z" fill="#c6ced3"/><rect x="0.4" y="9.3" width="15.2" height="6.5" fill="#d9c8f4"/><text x="8" y="15.3" text-anchor="middle" font-family="Liberation Sans" font-weight="bold" font-size="7.3" fill="#6443a0" textLength="14.2" lengthAdjust="spacingAndGlyphs">PHP</text></svg><span class="nm" style="left:115.5px;letter-spacing:0.09px;">FrontendEditAdvert.phtml</span></div>
<div class="row" style="top:560px;"><svg class="abs" style="left:96.5px;top:2px" width="16" height="16" viewBox="0 0 16 16"><path d="M6.9 1h5.3v7H2.6V5.3h4.3z" fill="#b1bac1"/><path d="M5.9 1.1v3.2H2.7z" fill="#c6ced3"/><rect x="0.4" y="9.3" width="15.2" height="6.5" fill="#d9c8f4"/><text x="8" y="15.3" text-anchor="middle" font-family="Liberation Sans" font-weight="bold" font-size="7.3" fill="#6443a0" textLength="14.2" lengthAdjust="spacingAndGlyphs">PHP</text></svg><span class="nm" style="left:115.5px;letter-spacing:-0.054px;">FrontendUserAdvertsList.phtml</span></div>
<div class="row" style="top:580px;"><svg class="abs" style="left:96.5px;top:2px" width="16" height="16" viewBox="0 0 16 16"><path d="M6.9 1h5.3v7H2.6V5.3h4.3z" fill="#b1bac1"/><path d="M5.9 1.1v3.2H2.7z" fill="#c6ced3"/><rect x="0.4" y="9.3" width="15.2" height="6.5" fill="#d9c8f4"/><text x="8" y="15.3" text-anchor="middle" font-family="Liberation Sans" font-weight="bold" font-size="7.3" fill="#6443a0" textLength="14.2" lengthAdjust="spacingAndGlyphs">PHP</text></svg><span class="nm" style="left:115.5px;letter-spacing:-0.14px;">FrontendUserPublicAdvertsList.phtml</span></div>
<div class="row" style="top:600px;"><svg class="abs" style="left:99px;top:3px" width="10" height="14" viewBox="0 0 10 14"><path d="M4.2 0h5.8v14H0V4.2h4.2z" fill="#a9b3ba"/><path d="M3.2 0.1v3.1H0.1z" fill="#c3cbd1"/><path d="M2 6.2h6M2 8.7h6M2 11.2h4" stroke="#55626b" stroke-width="1.1"/></svg><span class="nm" style="left:115.5px;letter-spacing:0.091px;">MailWithPaymentsInfo.mail</span></div>
<div class="row" style="top:620px;"><svg class="abs" style="left:96.5px;top:2px" width="16" height="16" viewBox="0 0 16 16"><path d="M6.9 1h5.3v7H2.6V5.3h4.3z" fill="#b1bac1"/><path d="M5.9 1.1v3.2H2.7z" fill="#c6ced3"/><rect x="0.4" y="9.3" width="15.2" height="6.5" fill="#d9c8f4"/><text x="8" y="15.3" text-anchor="middle" font-family="Liberation Sans" font-weight="bold" font-size="7.3" fill="#6443a0" textLength="14.2" lengthAdjust="spacingAndGlyphs">PHP</text></svg><span class="nm" style="left:115.5px;letter-spacing:0.154px;">Payment.phtml</span></div>
<div class="row" style="top:640px;"><svg class="abs" style="left:96.5px;top:2px" width="16" height="16" viewBox="0 0 16 16"><path d="M6.9 1h5.3v7H2.6V5.3h4.3z" fill="#b1bac1"/><path d="M5.9 1.1v3.2H2.7z" fill="#c6ced3"/><rect x="0.4" y="9.3" width="15.2" height="6.5" fill="#d9c8f4"/><text x="8" y="15.3" text-anchor="middle" font-family="Liberation Sans" font-weight="bold" font-size="7.3" fill="#6443a0" textLength="14.2" lengthAdjust="spacingAndGlyphs">PHP</text></svg><span class="nm" style="left:115.5px;letter-spacing:0.227px;">Thumbnail.phtml</span></div>
<div class="row" style="top:660px;"><svg class="abs" style="left:96.5px;top:2px" width="16" height="16" viewBox="0 0 16 16"><path d="M6.9 1h5.3v7H2.6V5.3h4.3z" fill="#b1bac1"/><path d="M5.9 1.1v3.2H2.7z" fill="#c6ced3"/><rect x="0.4" y="9.3" width="15.2" height="6.5" fill="#d9c8f4"/><text x="8" y="15.3" text-anchor="middle" font-family="Liberation Sans" font-weight="bold" font-size="7.3" fill="#6443a0" textLength="14.2" lengthAdjust="spacingAndGlyphs">PHP</text></svg><span class="nm" style="left:115.5px;letter-spacing:0.204px;">ThumbnailUnlink.phtml</span></div>
<div class="row" style="top:680px;"><svg class="abs" style="left:62.5px;top:5px" width="6" height="9" viewBox="0 0 6 9"><path d="M0.8 0.7L4.8 4.5L0.8 8.3" fill="none" stroke="#7d7d7d" stroke-width="1.3"/></svg><svg class="abs" style="left:79px;top:4px" width="14" height="11" viewBox="0 0 14 11"><path d="M0 0h5.2l1.8 2H14v9H0z" fill="#a4afb7"/></svg><span class="nm" style="left:97.5px;letter-spacing:-0.205px;">Type</span></div>
<div class="row" style="top:700px;"><svg class="abs" style="left:62.5px;top:5px" width="6" height="9" viewBox="0 0 6 9"><path d="M0.8 0.7L4.8 4.5L0.8 8.3" fill="none" stroke="#7d7d7d" stroke-width="1.3"/></svg><svg class="abs" style="left:79px;top:4px" width="14" height="11" viewBox="0 0 14 11"><path d="M0 0h5.2l1.8 2H14v9H0z" fill="#a4afb7"/></svg><span class="nm" style="left:97.5px;letter-spacing:0.114px;">Validator</span></div>
<div class="row" style="top:720px;"><svg class="abs" style="left:79px;top:3px" width="14" height="14" viewBox="0 0 14 14"><circle cx="7" cy="7" r="7" fill="#8fd0e6"/><path d="M9.1 5.4A2.5 2.5 0 1 0 9.1 8.6" fill="none" stroke="#4a5a66" stroke-width="1.15"/></svg><span class="nm" style="left:97.5px;letter-spacing:0.242px;">Anchor.php</span></div>
<div class="row" style="top:740px;"><svg class="abs" style="left:79px;top:3px" width="14" height="14" viewBox="0 0 14 14"><circle cx="7" cy="7" r="7" fill="#8fd0e6"/><path d="M9.1 5.4A2.5 2.5 0 1 0 9.1 8.6" fill="none" stroke="#4a5a66" stroke-width="1.15"/></svg><span class="nm" style="left:97.5px;letter-spacing:0.047px;">PaymentActionsEnum.php</span></div>
<div class="row" style="top:760px;"><svg class="abs" style="left:44.5px;top:5px" width="6" height="9" viewBox="0 0 6 9"><path d="M0.8 0.7L4.8 4.5L0.8 8.3" fill="none" stroke="#7d7d7d" stroke-width="1.3"/></svg><svg class="abs" style="left:61px;top:4px" width="14" height="11" viewBox="0 0 14 11"><path d="M0 0h5.2l1.8 2H14v9H0z" fill="#a4afb7"/></svg><span class="nm" style="left:79.5px;letter-spacing:0.175px;">Authorization</span></div>
<div class="row" style="top:780px;"><svg class="abs" style="left:44.5px;top:5px" width="6" height="9" viewBox="0 0 6 9"><path d="M0.8 0.7L4.8 4.5L0.8 8.3" fill="none" stroke="#7d7d7d" stroke-width="1.3"/></svg><svg class="abs" style="left:61px;top:4px" width="14" height="11" viewBox="0 0 14 11"><path d="M0 0h5.2l1.8 2H14v9H0z" fill="#a4afb7"/></svg><span class="nm" style="left:79.5px;letter-spacing:-0.043px;">Category</span></div>
<div class="row" style="top:800px;"><svg class="abs" style="left:44.5px;top:5px" width="6" height="9" viewBox="0 0 6 9"><path d="M0.8 0.7L4.8 4.5L0.8 8.3" fill="none" stroke="#7d7d7d" stroke-width="1.3"/></svg><svg class="abs" style="left:61px;top:4px" width="14" height="11" viewBox="0 0 14 11"><path d="M0 0h5.2l1.8 2H14v9H0z" fill="#a4afb7"/></svg><span class="nm" style="left:79.5px;letter-spacing:-0.28px;">Getpassword</span></div>
<div class="row" style="top:820px;"><svg class="abs" style="left:44.5px;top:5px" width="6" height="9" viewBox="0 0 6 9"><path d="M0.8 0.7L4.8 4.5L0.8 8.3" fill="none" stroke="#7d7d7d" stroke-width="1.3"/></svg><svg class="abs" style="left:61px;top:4px" width="14" height="11" viewBox="0 0 14 11"><path d="M0 0h5.2l1.8 2H14v9H0z" fill="#a4afb7"/></svg><span class="nm" style="left:79.5px;letter-spacing:0.071px;">Help</span></div>
<div class="row" style="top:840px;"><svg class="abs" style="left:44.5px;top:5px" width="6" height="9" viewBox="0 0 6 9"><path d="M0.8 0.7L4.8 4.5L0.8 8.3" fill="none" stroke="#7d7d7d" stroke-width="1.3"/></svg><svg class="abs" style="left:61px;top:4px" width="14" height="11" viewBox="0 0 14 11"><path d="M0 0h5.2l1.8 2H14v9H0z" fill="#a4afb7"/></svg><span class="nm" style="left:79.5px;letter-spacing:-0.24px;">Index</span></div>
<div class="row" style="top:860px;"><svg class="abs" style="left:44.5px;top:5px" width="6" height="9" viewBox="0 0 6 9"><path d="M0.8 0.7L4.8 4.5L0.8 8.3" fill="none" stroke="#7d7d7d" stroke-width="1.3"/></svg><svg class="abs" style="left:61px;top:4px" width="14" height="11" viewBox="0 0 14 11"><path d="M0 0h5.2l1.8 2H14v9H0z" fill="#a4afb7"/></svg><span class="nm" style="left:79.5px;letter-spacing:-0.197px;">Local</span></div>
<div class="row" style="top:880px;"><svg class="abs" style="left:44.5px;top:5px" width="6" height="9" viewBox="0 0 6 9"><path d="M0.8 0.7L4.8 4.5L0.8 8.3" fill="none" stroke="#7d7d7d" stroke-width="1.3"/></svg><svg class="abs" style="left:61px;top:4px" width="14" height="11" viewBox="0 0 14 11"><path d="M0 0h5.2l1.8 2H14v9H0z" fill="#a4afb7"/></svg><span class="nm" style="left:79.5px;letter-spacing:-0.14px;">NotFound</span></div></div>
<div class="abs" style="left:303px;top:109px;width:10px;height:611px;background:rgba(0,0,0,0.1)"></div>
<div class="abs" style="left:21px;top:988px;width:247px;height:10px;background:rgba(0,0,0,0.115)"></div>
<div id="ed"><div class="g" style="left:107px;top:0px;height:874px"></div>
<div class="g" style="left:139px;top:0px;height:874px"></div>
<div class="g" style="left:171px;top:0px;height:874px"></div>
<div class="g" style="left:203px;top:0px;height:874px"></div>
<div class="g" style="left:235px;top:24px;height:850px"></div>
<div class="g" style="left:267px;top:48px;height:826px"></div>
<div class="g" style="left:299px;top:120px;height:312px"></div>
<div class="g" style="left:299px;top:528px;height:240px"></div>
<div class="g" style="left:299px;top:840px;height:34px"></div>
<div class="g" style="left:331px;top:144px;height:120px"></div>
<div class="g" style="left:331px;top:288px;height:120px"></div>
<div class="g" style="left:331px;top:552px;height:24px"></div>
<div class="g" style="left:331px;top:600px;height:144px"></div>
<div class="g" style="left:363px;top:168px;height:24px"></div>
<div class="g" style="left:363px;top:216px;height:24px"></div>
<div class="g" style="left:363px;top:312px;height:24px"></div>
<div class="g" style="left:363px;top:360px;height:24px"></div>
<div class="g" style="left:363px;top:624px;height:48px"></div>
<div class="g" style="left:363px;top:696px;height:24px"></div>
<div class="g" style="left:1037px;top:0;height:867px;background:#e3e3e3"></div>
<div id="gut"></div><div id="gline"></div>
<div class="ln" style="top:0px">122</div>
<svg class="abs" style="left:65px;top:7px" width="11" height="13" viewBox="0 0 11 13"><path d="M0.5 0.5h10v7.5L5.5 12.4L0.5 8z" fill="#fff" stroke="#cacaca" stroke-width="1"/><path d="M3 5h5" stroke="#c2c2c2" stroke-width="0.8"/></svg>
<div class="cl" style="left:237px;top:0px">&lt;<span class="tn">div</span><span class="an"> class=</span><span class="av">"right_column"</span>&gt;</div>
<div class="ln" style="top:24px">123</div>
<svg class="abs" style="left:65px;top:31px" width="11" height="13" viewBox="0 0 11 13"><path d="M0.5 0.5h10v7.5L5.5 12.4L0.5 8z" fill="#fff" stroke="#cacaca" stroke-width="1"/><path d="M3 5h5" stroke="#c2c2c2" stroke-width="0.8"/></svg>
<div class="cl" style="left:269px;top:24px">&lt;<span class="tn">div</span><span class="an"> class=</span><span class="av">"right_column_content"</span>&gt;</div>
<div class="ln" style="top:48px">124</div>
<div class="ln" style="top:72px">125</div>
<div class="cl" style="left:301px;top:72px"><span class="cm">&lt;!--noindex--&gt;</span></div>
<div class="ln" style="top:96px">126</div>
<svg class="abs" style="left:65px;top:103px" width="11" height="13" viewBox="0 0 11 13"><path d="M0.5 0.5h10v7.5L5.5 12.4L0.5 8z" fill="#fff" stroke="#cacaca" stroke-width="1"/><path d="M3 5h5" stroke="#c2c2c2" stroke-width="0.8"/></svg>
<div class="cl" style="left:301px;top:96px">&lt;<span class="tn">span</span><span class="an"> class=</span><span class="av">"price"</span>&gt;</div>
<div class="ln" style="top:120px">127</div>
<svg class="abs" style="left:65px;top:127px" width="11" height="13" viewBox="0 0 11 13"><path d="M0.5 0.5h10v7.5L5.5 12.4L0.5 8z" fill="#fff" stroke="#cacaca" stroke-width="1"/><path d="M3 5h5" stroke="#c2c2c2" stroke-width="0.8"/></svg>
<div class="cl" style="left:333px;top:120px"><span class="P"><span class="kw">&lt;?php if</span> (<span class="v">$advert</span>-&gt;<span class="mm">getFree</span>()): <span class="kw">?&gt;</span></span></div>
<div class="ln" style="top:144px">128</div>
<svg class="abs" style="left:65px;top:151px" width="11" height="13" viewBox="0 0 11 13"><path d="M0.5 0.5h10v7.5L5.5 12.4L0.5 8z" fill="#fff" stroke="#cacaca" stroke-width="1"/><path d="M3 5h5" stroke="#c2c2c2" stroke-width="0.8"/></svg>
<div class="cl" style="left:365px;top:144px"><span class="P"><span class="kw">&lt;?php if</span> (<span class="v">$advert</span>-&gt;<span class="mm">getType</span>()-&gt;<span class="m">getValue</span>() == AdvertType::<span class="cn">TYPE_SALE</span>): <span class="kw">?&gt;</span></span></div>
<div class="ln" style="top:168px">129</div>
<div class="cl" style="left:397px;top:168px">Отдам даром</div>
<div class="ln" style="top:192px">130</div>
<svg class="abs" style="left:65px;top:199px" width="11" height="13" viewBox="0 0 11 13"><path d="M0.5 0.5h10v7.5L5.5 12.4L0.5 8z" fill="#fff" stroke="#cacaca" stroke-width="1"/><path d="M3 5h5" stroke="#c2c2c2" stroke-width="0.8"/></svg>
<div class="cl" style="left:365px;top:192px"><span class="P"><span class="kw">&lt;?php else</span>: <span class="kw">?&gt;</span></span></div>
<div class="ln" style="top:216px">131</div>
<div class="cl" style="left:397px;top:216px">Приму в дар</div>
<div class="ln" style="top:240px">132</div>
<svg class="abs" style="left:65px;top:245px" width="11" height="13" viewBox="0 0 11 13"><path d="M0.5 12.5h10v-7.5L5.5 0.6L0.5 5z" fill="#fff" stroke="#cacaca" stroke-width="1"/><path d="M3 8h5" stroke="#c2c2c2" stroke-width="0.8"/></svg>
<div class="cl" style="left:365px;top:240px"><span class="P"><span class="kw">&lt;?php endif</span>; <span class="kw">?&gt;</span></span></div>
<div class="ln" style="top:264px">133</div>
<svg class="abs" style="left:65px;top:271px" width="11" height="13" viewBox="0 0 11 13"><path d="M0.5 0.5h10v7.5L5.5 12.4L0.5 8z" fill="#fff" stroke="#cacaca" stroke-width="1"/><path d="M3 5h5" stroke="#c2c2c2" stroke-width="0.8"/></svg>
<div class="cl" style="left:333px;top:264px"><span class="P"><span class="kw">&lt;?php else</span>: <span class="kw">?&gt;</span></span></div>
<div class="ln" style="top:288px">134</div>
<svg class="abs" style="left:65px;top:295px" width="11" height="13" viewBox="0 0 11 13"><path d="M0.5 0.5h10v7.5L5.5 12.4L0.5 8z" fill="#fff" stroke="#cacaca" stroke-width="1"/><path d="M3 5h5" stroke="#c2c2c2" stroke-width="0.8"/></svg>
<div class="cl" style="left:365px;top:288px"><span class="P"><span class="kw">&lt;?php if</span> (!<span class="v">$advert</span>-&gt;<span class="mm">getPrice</span>()): <span class="kw">?&gt;</span></span></div>
<div class="ln" style="top:312px">135</div>
<div class="cl" style="left:397px;top:312px">Договорная цена</div>
<div class="ln" style="top:336px">136</div>
<svg class="abs" style="left:65px;top:343px" width="11" height="13" viewBox="0 0 11 13"><path d="M0.5 0.5h10v7.5L5.5 12.4L0.5 8z" fill="#fff" stroke="#cacaca" stroke-width="1"/><path d="M3 5h5" stroke="#c2c2c2" stroke-width="0.8"/></svg>
<div class="cl" style="left:365px;top:336px"><span class="P"><span class="kw">&lt;?php else</span>: <span class="kw">?&gt;</span></span></div>
<div class="ln" style="top:360px">137</div>
<div class="cl" style="left:397px;top:360px">&lt;<span class="tn">strong</span>&gt;<span class="P"><span class="kw">&lt;?=</span> Format::<span class="sm">prettyNumber</span>(<span class="v">$advert</span>-&gt;<span class="mm">getPrice</span>()) <span class="kw">?&gt;</span></span>&lt;/<span class="tn">strong</span>&gt; <span class="P"><span class="kw">&lt;?=</span> <span class="v">$advert</span>-&gt;<span class="mm">getPriceType</span>()-&gt;<span class="m">getAsSymbol</span>() <span class="kw">?&gt;</span></span></div>
<div class="ln" style="top:384px">138</div>
<svg class="abs" style="left:65px;top:389px" width="11" height="13" viewBox="0 0 11 13"><path d="M0.5 12.5h10v-7.5L5.5 0.6L0.5 5z" fill="#fff" stroke="#cacaca" stroke-width="1"/><path d="M3 8h5" stroke="#c2c2c2" stroke-width="0.8"/></svg>
<div class="cl" style="left:365px;top:384px"><span class="P"><span class="kw">&lt;?php endif</span>; <span class="kw">?&gt;</span></span></div>
<div class="ln" style="top:408px">139</div>
<svg class="abs" style="left:65px;top:413px" width="11" height="13" viewBox="0 0 11 13"><path d="M0.5 12.5h10v-7.5L5.5 0.6L0.5 5z" fill="#fff" stroke="#cacaca" stroke-width="1"/><path d="M3 8h5" stroke="#c2c2c2" stroke-width="0.8"/></svg>
<div class="cl" style="left:333px;top:408px"><span class="P"><span class="kw">&lt;?php endif</span>; <span class="kw">?&gt;</span></span></div>
<div class="ln" style="top:432px">140</div>
<svg class="abs" style="left:65px;top:437px" width="11" height="13" viewBox="0 0 11 13"><path d="M0.5 12.5h10v-7.5L5.5 0.6L0.5 5z" fill="#fff" stroke="#cacaca" stroke-width="1"/><path d="M3 8h5" stroke="#c2c2c2" stroke-width="0.8"/></svg>
<div class="cl" style="left:301px;top:432px">&lt;/<span class="tn">span</span>&gt;</div>
<div class="ln" style="top:456px">141</div>
<div class="cl" style="left:301px;top:456px"><span class="cm">&lt;!--/noindex--&gt;</span></div>
<div class="ln" style="top:480px">142</div>
<div class="ln" style="top:504px">143</div>
<svg class="abs" style="left:65px;top:511px" width="11" height="13" viewBox="0 0 11 13"><path d="M0.5 0.5h10v7.5L5.5 12.4L0.5 8z" fill="#fff" stroke="#cacaca" stroke-width="1"/><path d="M3 5h5" stroke="#c2c2c2" stroke-width="0.8"/></svg>
<div class="cl" style="left:301px;top:504px">&lt;<span class="tn">header</span>&gt;</div>
<div class="ln" style="top:528px">144</div>
<svg class="abs" style="left:65px;top:535px" width="11" height="13" viewBox="0 0 11 13"><path d="M0.5 0.5h10v7.5L5.5 12.4L0.5 8z" fill="#fff" stroke="#cacaca" stroke-width="1"/><path d="M3 5h5" stroke="#c2c2c2" stroke-width="0.8"/></svg>
<div class="cl" style="left:333px;top:528px"><span class="P"><span class="kw">&lt;?php if</span> (<span class="v">$isFrontendAdvertViewController</span>): <span class="kw">?&gt;</span></span></div>
<div class="ln" style="top:552px">145</div>
<div class="cl" style="left:365px;top:552px">&lt;<span class="tn">h2</span>&gt;<span class="P"><span class="kw">&lt;?=</span> Format::<span class="sm">outPut</span>(<span class="v">$advert</span>-&gt;<span class="mm">getHeader</span>()) <span class="kw">?&gt;</span></span>&lt;/<span class="tn">h2</span>&gt;</div>
<div class="ln" style="top:576px">146</div>
<svg class="abs" style="left:65px;top:583px" width="11" height="13" viewBox="0 0 11 13"><path d="M0.5 0.5h10v7.5L5.5 12.4L0.5 8z" fill="#fff" stroke="#cacaca" stroke-width="1"/><path d="M3 5h5" stroke="#c2c2c2" stroke-width="0.8"/></svg>
<div class="cl" style="left:333px;top:576px"><span class="P"><span class="kw">&lt;?php else</span>: <span class="kw">?&gt;</span></span></div>
<div class="ln" style="top:600px">147</div>
<svg class="abs" style="left:65px;top:607px" width="11" height="13" viewBox="0 0 11 13"><path d="M0.5 0.5h10v7.5L5.5 12.4L0.5 8z" fill="#fff" stroke="#cacaca" stroke-width="1"/><path d="M3 5h5" stroke="#c2c2c2" stroke-width="0.8"/></svg>
<div class="cl" style="left:365px;top:600px">&lt;<span class="tn">h3</span><span class="an"> class=</span><span class="av">"</span><span class="P"><span class="kw">&lt;?php if</span> (<span class="v">$advert</span>-&gt;<span class="m">getIsVip</span>() || <span class="v">$advert</span>-&gt;<span class="m">getIsSpecial</span>()): <span class="kw">?&gt;</span></span><span class="av">add_header_icon add_star_icon</span><span class="P"><span class="kw">&lt;?php endif</span>; <span class="kw">?&gt;</span></span><span class="av">"</span>&gt;&lt;<span class="tn">a</span></div>
<div class="ln" style="top:624px">148</div>
<div class="cl" style="left:397px;top:624px"><span class="an">href=</span><span class="av">"/advert/</span><span class="P"><span class="kw">&lt;?=</span> <span class="v">$advert</span>-&gt;<span class="mm">getId</span>() <span class="kw">?&gt;</span></span><span class="av">.xhtml"</span></div>
<div class="ln" style="top:648px">149</div>
<svg class="abs" style="left:65px;top:653px" width="11" height="13" viewBox="0 0 11 13"><path d="M0.5 12.5h10v-7.5L5.5 0.6L0.5 5z" fill="#fff" stroke="#cacaca" stroke-width="1"/><path d="M3 8h5" stroke="#c2c2c2" stroke-width="0.8"/></svg>
<div class="cl" style="left:397px;top:648px">&gt;<span class="P"><span class="kw">&lt;?=</span> Format::<span class="sm">outPut</span>(<span class="v">$advert</span>-&gt;<span class="mm">getHeader</span>()) <span class="kw">?&gt;</span></span>&lt;/<span class="tn">a</span>&gt;&lt;/<span class="tn">h3</span>&gt;</div>
<div class="ln" style="top:672px">150</div>
<svg class="abs" style="left:65px;top:679px" width="11" height="13" viewBox="0 0 11 13"><path d="M0.5 0.5h10v7.5L5.5 12.4L0.5 8z" fill="#fff" stroke="#cacaca" stroke-width="1"/><path d="M3 5h5" stroke="#c2c2c2" stroke-width="0.8"/></svg>
<div class="cl" style="left:365px;top:672px"><span class="P"><span class="kw">&lt;?php if</span> (<span class="v">$advert</span>-&gt;<span class="mm">getBalance</span>()): <span class="kw">?&gt;</span></span></div>
<div class="ln" style="top:696px">151</div>
<div class="cl" style="left:397px;top:696px">&lt;<span class="tn">div</span><span class="an"> class=</span><span class="av">"balance"</span>&gt;<span class="P"><span class="kw">&lt;?=</span><span class="v">$advert</span>-&gt;<span class="mm">getBalance</span>()<span class="kw">?&gt;</span></span> шт. в наличии&lt;/<span class="tn">div</span>&gt;</div>
<div class="ln" style="top:720px">152</div>
<svg class="abs" style="left:65px;top:725px" width="11" height="13" viewBox="0 0 11 13"><path d="M0.5 12.5h10v-7.5L5.5 0.6L0.5 5z" fill="#fff" stroke="#cacaca" stroke-width="1"/><path d="M3 8h5" stroke="#c2c2c2" stroke-width="0.8"/></svg>
<div class="cl" style="left:365px;top:720px"><span class="P"><span class="kw">&lt;?php endif</span>; <span class="kw">?&gt;</span></span></div>
<div class="ln" style="top:744px">153</div>
<svg class="abs" style="left:65px;top:749px" width="11" height="13" viewBox="0 0 11 13"><path d="M0.5 12.5h10v-7.5L5.5 0.6L0.5 5z" fill="#fff" stroke="#cacaca" stroke-width="1"/><path d="M3 8h5" stroke="#c2c2c2" stroke-width="0.8"/></svg>
<div class="cl" style="left:333px;top:744px"><span class="P"><span class="kw">&lt;?php endif</span>; <span class="kw">?&gt;</span></span></div>
<div class="ln" style="top:768px">154</div>
<svg class="abs" style="left:65px;top:773px" width="11" height="13" viewBox="0 0 11 13"><path d="M0.5 12.5h10v-7.5L5.5 0.6L0.5 5z" fill="#fff" stroke="#cacaca" stroke-width="1"/><path d="M3 8h5" stroke="#c2c2c2" stroke-width="0.8"/></svg>
<div class="cl" style="left:301px;top:768px">&lt;/<span class="tn">header</span>&gt;</div>
<div class="ln" style="top:792px">155</div>
<div class="ln" style="top:816px">156</div>
<svg class="abs" style="left:65px;top:823px" width="11" height="13" viewBox="0 0 11 13"><path d="M0.5 0.5h10v7.5L5.5 12.4L0.5 8z" fill="#fff" stroke="#cacaca" stroke-width="1"/><path d="M3 5h5" stroke="#c2c2c2" stroke-width="0.8"/></svg>
<div class="cl" style="left:301px;top:816px">&lt;<span class="tn">div</span><span class="an"> class=</span><span class="av">"field_row"</span>&gt;</div>
<div class="ln" style="top:840px">157</div>
<div class="cl" style="left:333px;top:840px">&lt;<span class="tn">div</span>&gt;<span class="cm">&lt;!--noindex--&gt;</span>Категория:<span class="cm">&lt;!--/noindex--&gt;</span>&lt;/<span class="tn">div</span>&gt;</div></div>
<svg class="abs" style="left:1829px;top:116px" width="12" height="11" viewBox="0 0 12 11"><path d="M6 0.3L11.8 10.7H0.2z" fill="#e6d9a3"/><path d="M6 3.8v3.6" stroke="#fff" stroke-width="1.3"/><circle cx="6" cy="9" r="0.8" fill="#fff"/></svg>
<span class="t" style="left:1843.6px;top:114.6px;color:#6e6e6e;font-size:11.5px;">2</span>
<svg class="abs" style="left:1860px;top:118px" width="10" height="6" viewBox="0 0 10 6"><path d="M0.8 5.4L5 1.2l4.2 4.2" fill="none" stroke="#6e6e6e" stroke-width="1.6"/></svg>
<svg class="abs" style="left:1881px;top:119px" width="10" height="6" viewBox="0 0 10 6"><path d="M0.8 0.8L5 5l4.2-4.2" fill="none" stroke="#6e6e6e" stroke-width="1.6"/></svg>
<div class="abs" style="left:1888px;top:299px;width:10px;height:54px;background:#e1e1e1"></div>
<div class="abs" style="left:1884px;top:746px;width:14px;height:2px;background:#ddd3a4"></div>
<div class="abs" style="left:1884px;top:766px;width:14px;height:2px;background:#ddd3a4"></div>
<div class="abs" style="left:391px;top:965px;width:972px;height:11px;background:rgba(0,0,0,0.115)"></div>
<div class="abs" style="left:314px;top:976px;width:1584px;height:22px;background:#f2f2f2"></div>
<div class="abs" style="left:1898px;top:82px;width:1px;height:916px;background:#d1d1d1"></div>
<svg class="abs" style="left:1903.7px;top:91.6px" width="12" height="13" viewBox="0 0 12 13"><ellipse cx="5.7" cy="2.3" rx="5.5" ry="2.1" fill="#6e6e6e"/><path d="M0.2 3.8c0 2.6 11 2.6 11 0v1.5c0 2.6-11 2.6-11 0zM0.2 6.7c0 2.6 11 2.6 11 0v1.5c0 2.6-11 2.6-11 0zM0.2 9.6c0 2.6 11 2.6 11 0v1.3c0 2.6-11 2.6-11 0z" fill="#6e6e6e"/></svg>
<span class="t" style="left:1915.8px;top:109.4px;transform-origin:0 0;transform:rotate(90deg);font-size:11.5px;letter-spacing:-0.233px">Database</span>
<div class="abs" style="left:0;top:998px;width:1920px;height:42px;background:#f2f2f2"></div>
<div class="hl" style="top:998px"></div>
<div class="hl" style="top:1020px"></div>
<svg class="abs" style="left:30.8px;top:1004.5px" width="10" height="12" viewBox="0 0 10 12"><path d="M1.2 0v12" stroke="#6e6e6e" stroke-width="2"/><path d="M1.2 8.4h5.6V3" fill="none" stroke="#6e6e6e" stroke-width="1.9"/><path d="M3.4 4.8L6.8 1l3.2 3.8z" fill="#6e6e6e"/></svg>
<span class="t" style="left:46px;top:1003px;letter-spacing:0.278px;">Git</span>
<svg class="abs" style="left:80.8px;top:1005px" width="11" height="11" viewBox="0 0 11 11"><circle cx="4.5" cy="4.5" r="3.5" fill="none" stroke="#6e6e6e" stroke-width="1.9"/><path d="M7 7l3.5 3.5" stroke="#6e6e6e" stroke-width="2.2"/></svg>
<span class="t" style="left:97px;top:1003px;letter-spacing:0.185px;">Find</span>
<svg class="abs" style="left:140.5px;top:1006px" width="10" height="9" viewBox="0 0 10 9"><path d="M0 1h2M3.2 1H10M0 4.5h2M3.2 4.5H10M0 8h2M3.2 8H10" stroke="#6e6e6e" stroke-width="1.9"/></svg>
<span class="t" style="left:155.8px;top:1003px;letter-spacing:-0.618px;">TODO</span>
<svg class="abs" style="left:209px;top:1004px" width="11" height="11" viewBox="0 0 11 11"><circle cx="5.5" cy="5.5" r="5.3" fill="#6e6e6e"/><path d="M5.5 2.4v4" stroke="#f2f2f2" stroke-width="1.5"/><circle cx="5.5" cy="8.3" r="0.9" fill="#f2f2f2"/></svg>
<span class="t" style="left:225px;top:1003px;letter-spacing:-0.398px;">Problems</span>
<svg class="abs" style="left:294px;top:1005px" width="11" height="10" viewBox="0 0 11 10"><rect width="11" height="10" rx="0.8" fill="#6e6e6e"/><path d="M2 2.2l2.6 2.3L2 6.8M5.6 7.6h3.4" fill="none" stroke="#f2f2f2" stroke-width="1.1"/></svg>
<span class="t" style="left:309.8px;top:1003px;letter-spacing:-0.037px;">Terminal</span>
<svg class="abs" style="left:1821px;top:1004px" width="13" height="13" viewBox="0 0 13 13"><path d="M6.5 0A6.5 6.5 0 1 0 6.5 13H13V6.5A6.5 6.5 0 0 0 6.5 0z" fill="#59a869"/><path d="M4.6 4.6L6.6 3.2h0.9v6.9" fill="none" stroke="#fff" stroke-width="1.5"/></svg>
<span class="t" style="left:1838.3px;top:1003px;letter-spacing:-0.493px;">Event Log</span>
<svg class="abs" style="left:5px;top:1025px" width="12" height="12" viewBox="0 0 12 12"><rect x="2.5" y="0.5" width="9" height="9" fill="none" stroke="#6e6e6e"/><path d="M0.5 2.5v9h9" fill="none" stroke="#6e6e6e"/></svg>
<span class="t" style="left:1611.3px;top:1023px;letter-spacing:-0.49px;">PHP: 8.0</span>
<span class="t" style="left:1667.5px;top:1023px;letter-spacing:-0.8px;">1:1</span>
<span class="t" style="left:1694.3px;top:1023px;letter-spacing:-0.8px;">CRLF</span>
<span class="t" style="left:1733px;top:1023px;letter-spacing:-0.45px;">UTF-8</span>
<span class="t" style="left:1775.8px;top:1023px;letter-spacing:-0.419px;">4 spaces</span>
<svg class="abs" style="left:1834px;top:1024px" width="10" height="14" viewBox="0 0 10 14"><path d="M2.2 1.6v11M8 2.4c0 4.6-5.8 3-5.8 7.6" fill="none" stroke="#6e6e6e" stroke-width="1.6"/><circle cx="2.2" cy="1.7" r="1.5" fill="#6e6e6e"/><circle cx="8" cy="2.3" r="1.5" fill="#6e6e6e"/><circle cx="2.2" cy="12.4" r="1.5" fill="#6e6e6e"/></svg>
<span class="t" style="left:1849.3px;top:1023px;letter-spacing:-0.017px;">master</span>
<svg class="abs" style="left:1895px;top:1025px" width="12" height="11" viewBox="0 0 12 11"><rect x="3.5" y="4.5" width="8" height="6" fill="#6e6e6e"/><path d="M5 4.5V3a2.2 2.2 0 0 0-4.4 0v1" fill="none" stroke="#6e6e6e" stroke-width="1.2"/></svg>
</body></html>
